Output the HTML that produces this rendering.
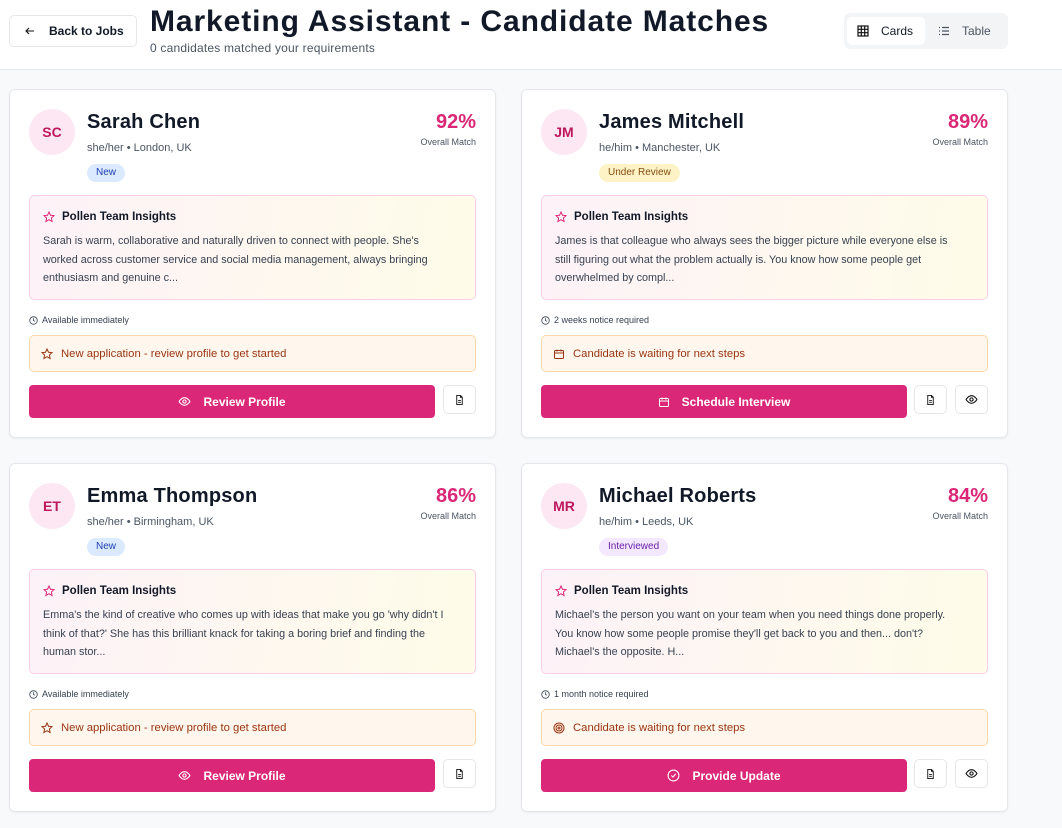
<!DOCTYPE html>
<html><head><meta charset="utf-8"><style>
*{box-sizing:border-box;margin:0;padding:0}
body{width:1062px;height:828px;overflow:hidden;background:#f8f9fb;font-family:"Liberation Sans",sans-serif;color:#111827;position:relative}
.hdr{position:absolute;left:0;top:0;width:1062px;height:70px;background:#fff;border-bottom:1px solid #e5e7eb}
.back{position:absolute;left:9px;top:15px;width:128px;height:32px;border:1px solid #e5e7eb;border-radius:5px;font-size:12px;font-weight:bold;display:flex;align-items:center;padding-left:14px;gap:13px}
h1{position:absolute;left:150px;top:5px;font-size:30px;font-weight:bold;letter-spacing:0.9px;color:#111827}
.subt{position:absolute;left:150px;top:41px;font-size:12px;color:#4b5563;letter-spacing:0.2px}
.tog{position:absolute;left:844px;top:13px;width:164px;height:36px;background:#f3f4f6;border-radius:6px}
.tog .c{position:absolute;left:3px;top:4px;width:78px;height:28px;background:#fff;border-radius:5px;font-size:12px;display:flex;align-items:center;padding-left:10px;gap:12px}
.tog .t{position:absolute;left:94px;top:4px;height:28px;font-size:12px;color:#4b5563;display:flex;align-items:center;gap:12px}
.card{position:absolute;width:487px;height:349px;background:#fff;border:1px solid #e5e7eb;border-radius:6px;box-shadow:0 1px 2px rgba(0,0,0,.05)}
.av{position:absolute;left:19px;top:19px;width:46px;height:46px;border-radius:50%;background:#fce7f3;color:#be185d;font-weight:bold;font-size:14px;display:flex;align-items:center;justify-content:center}
.nm{position:absolute;left:77px;top:21px;font-size:20px;font-weight:bold;letter-spacing:0.2px}
.loc{position:absolute;left:77px;top:52px;font-size:11px;color:#4b5563}
.bd{position:absolute;left:77px;top:74px;height:18px;border-radius:9px;font-size:10px;padding:0 9px;line-height:18px}
.pct{position:absolute;right:19px;top:21px;font-size:20px;font-weight:bold;color:#db2777}
.om{position:absolute;right:19px;top:47px;font-size:9px;color:#4b5563}
.ins{position:absolute;left:19px;top:105px;width:447px;height:105px;border:1px solid #fbcfe8;border-radius:5px;background:linear-gradient(100deg,#fdf2f8,#fefce8)}
.ins .tt{position:absolute;left:13px;top:15px;font-size:11.5px;font-weight:bold;display:flex;align-items:center;gap:7px}
.ins .tx{position:absolute;left:13px;top:36px;width:405px;font-size:10.8px;line-height:18.5px;color:#374151}
.av2{position:absolute;left:19px;top:225px;font-size:9px;color:#374151;display:flex;align-items:center;gap:4px}
.st{position:absolute;left:19px;top:245px;width:447px;height:37px;border:1px solid #fed7aa;border-radius:5px;background:#fff7ed;color:#9a3412;font-size:11.3px;display:flex;align-items:center;padding-left:11px;gap:8px}
.pb{position:absolute;left:19px;top:295px;width:406px;height:33px;background:#db2777;border-radius:4px;color:#fff;font-weight:bold;font-size:12px;display:flex;align-items:center;justify-content:center;gap:12px}
.pb.s{width:366px}
.ib{position:absolute;top:295px;width:33px;height:29px;border:1px solid #e5e7eb;border-radius:5px;background:#fff;display:flex;align-items:center;justify-content:center}
</style></head><body>
<div class="hdr">
<div class="back"><svg width="12" height="12" viewBox="0 0 24 24" fill="none" stroke="#111" stroke-width="2.2"><path d="M20 12H4M10 6l-6 6 6 6"/></svg>Back to Jobs</div>
<h1>Marketing Assistant - Candidate Matches</h1>
<div class="subt">0 candidates matched your requirements</div>
<div class="tog"><div class="c"><svg width="12" height="12" viewBox="0 0 12 12" fill="none" stroke="#111" stroke-width="1.2"><rect x="1" y="1" width="10" height="10"/><path d="M4.3 1v10M7.7 1v10M1 4.3h10M1 7.7h10"/></svg>Cards</div><div class="t"><svg width="12" height="12" viewBox="0 0 12 12" fill="none" stroke="#4b5563" stroke-width="1.2"><path d="M1 2.5h1M1 6h1M1 9.5h1M4 2.5h7M4 6h7M4 9.5h7"/></svg>Table</div></div>
</div>

<div class="card" style="left:9px;top:89px">
<div class="av">SC</div><div class="nm">Sarah Chen</div><div class="loc">she/her • London, UK</div>
<div class="bd" style="background:#dbeafe;color:#1e40af">New</div>
<div class="pct">92%</div><div class="om">Overall Match</div>
<div class="ins"><div class="tt"><svg width="12" height="12" viewBox="0 0 24 24" fill="none" stroke="#db2777" stroke-width="2"><path d="M12 2l3 6.5 7 .8-5.2 4.8 1.4 7L12 17.5 5.8 21l1.4-7L2 9.3l7-.8z"/></svg>Pollen Team Insights</div>
<div class="tx">Sarah is warm, collaborative and naturally driven to connect with people. She's worked across customer service and social media management, always bringing enthusiasm and genuine c...</div></div>
<div class="av2"><svg width="9" height="9" viewBox="0 0 24 24" fill="none" stroke="#4b5563" stroke-width="2.4"><circle cx="12" cy="12" r="10"/><path d="M12 6v6l4 2"/></svg>Available immediately</div>
<div class="st"><svg width="12" height="12" viewBox="0 0 24 24" fill="none" stroke="#9a3412" stroke-width="2"><path d="M12 2l3 6.5 7 .8-5.2 4.8 1.4 7L12 17.5 5.8 21l1.4-7L2 9.3l7-.8z"/></svg>New application - review profile to get started</div>
<div class="pb"><svg width="13" height="13" viewBox="0 0 24 24" fill="none" stroke="#fff" stroke-width="2"><path d="M2 12s4-7 10-7 10 7 10 7-4 7-10 7S2 12 2 12z"/><circle cx="12" cy="12" r="3"/></svg>Review Profile</div>
<div class="ib" style="left:433px"><svg width="11" height="12" viewBox="0 0 24 24" fill="none" stroke="#111" stroke-width="2"><path d="M14 2H6v20h12V6z"/><path d="M14 2v4h4M9 13h6M9 17h6"/></svg></div>
</div>

<div class="card" style="left:521px;top:89px">
<div class="av">JM</div><div class="nm">James Mitchell</div><div class="loc">he/him • Manchester, UK</div>
<div class="bd" style="background:#fef3c7;color:#854d0e">Under Review</div>
<div class="pct">89%</div><div class="om">Overall Match</div>
<div class="ins"><div class="tt"><svg width="12" height="12" viewBox="0 0 24 24" fill="none" stroke="#db2777" stroke-width="2"><path d="M12 2l3 6.5 7 .8-5.2 4.8 1.4 7L12 17.5 5.8 21l1.4-7L2 9.3l7-.8z"/></svg>Pollen Team Insights</div>
<div class="tx">James is that colleague who always sees the bigger picture while everyone else is still figuring out what the problem actually is. You know how some people get overwhelmed by compl...</div></div>
<div class="av2"><svg width="9" height="9" viewBox="0 0 24 24" fill="none" stroke="#4b5563" stroke-width="2.4"><circle cx="12" cy="12" r="10"/><path d="M12 6v6l4 2"/></svg>2 weeks notice required</div>
<div class="st"><svg width="12" height="12" viewBox="0 0 24 24" fill="none" stroke="#9a3412" stroke-width="2"><rect x="3" y="5" width="18" height="16" rx="2"/><path d="M3 10h18M8 3v4M16 3v4"/></svg>Candidate is waiting for next steps</div>
<div class="pb s"><svg width="12" height="12" viewBox="0 0 24 24" fill="none" stroke="#fff" stroke-width="2"><rect x="3" y="5" width="18" height="16" rx="2"/><path d="M3 10h18M8 3v4M16 3v4"/></svg>Schedule Interview</div>
<div class="ib" style="left:392px"><svg width="11" height="12" viewBox="0 0 24 24" fill="none" stroke="#111" stroke-width="2"><path d="M14 2H6v20h12V6z"/><path d="M14 2v4h4M9 13h6M9 17h6"/></svg></div>
<div class="ib" style="left:433px"><svg width="13" height="13" viewBox="0 0 24 24" fill="none" stroke="#111" stroke-width="2"><path d="M2 12s4-7 10-7 10 7 10 7-4 7-10 7S2 12 2 12z"/><circle cx="12" cy="12" r="3"/></svg></div>
</div>

<div class="card" style="left:9px;top:463px">
<div class="av">ET</div><div class="nm">Emma Thompson</div><div class="loc">she/her • Birmingham, UK</div>
<div class="bd" style="background:#dbeafe;color:#1e40af">New</div>
<div class="pct">86%</div><div class="om">Overall Match</div>
<div class="ins"><div class="tt"><svg width="12" height="12" viewBox="0 0 24 24" fill="none" stroke="#db2777" stroke-width="2"><path d="M12 2l3 6.5 7 .8-5.2 4.8 1.4 7L12 17.5 5.8 21l1.4-7L2 9.3l7-.8z"/></svg>Pollen Team Insights</div>
<div class="tx">Emma's the kind of creative who comes up with ideas that make you go 'why didn't I think of that?' She has this brilliant knack for taking a boring brief and finding the human stor...</div></div>
<div class="av2"><svg width="9" height="9" viewBox="0 0 24 24" fill="none" stroke="#4b5563" stroke-width="2.4"><circle cx="12" cy="12" r="10"/><path d="M12 6v6l4 2"/></svg>Available immediately</div>
<div class="st"><svg width="12" height="12" viewBox="0 0 24 24" fill="none" stroke="#9a3412" stroke-width="2"><path d="M12 2l3 6.5 7 .8-5.2 4.8 1.4 7L12 17.5 5.8 21l1.4-7L2 9.3l7-.8z"/></svg>New application - review profile to get started</div>
<div class="pb"><svg width="13" height="13" viewBox="0 0 24 24" fill="none" stroke="#fff" stroke-width="2"><path d="M2 12s4-7 10-7 10 7 10 7-4 7-10 7S2 12 2 12z"/><circle cx="12" cy="12" r="3"/></svg>Review Profile</div>
<div class="ib" style="left:433px"><svg width="11" height="12" viewBox="0 0 24 24" fill="none" stroke="#111" stroke-width="2"><path d="M14 2H6v20h12V6z"/><path d="M14 2v4h4M9 13h6M9 17h6"/></svg></div>
</div>

<div class="card" style="left:521px;top:463px">
<div class="av">MR</div><div class="nm">Michael Roberts</div><div class="loc">he/him • Leeds, UK</div>
<div class="bd" style="background:#f3e8ff;color:#6b21a8">Interviewed</div>
<div class="pct">84%</div><div class="om">Overall Match</div>
<div class="ins"><div class="tt"><svg width="12" height="12" viewBox="0 0 24 24" fill="none" stroke="#db2777" stroke-width="2"><path d="M12 2l3 6.5 7 .8-5.2 4.8 1.4 7L12 17.5 5.8 21l1.4-7L2 9.3l7-.8z"/></svg>Pollen Team Insights</div>
<div class="tx">Michael's the person you want on your team when you need things done properly. You know how some people promise they'll get back to you and then... don't? Michael's the opposite. H...</div></div>
<div class="av2"><svg width="9" height="9" viewBox="0 0 24 24" fill="none" stroke="#4b5563" stroke-width="2.4"><circle cx="12" cy="12" r="10"/><path d="M12 6v6l4 2"/></svg>1 month notice required</div>
<div class="st"><svg width="12" height="12" viewBox="0 0 24 24" fill="none" stroke="#9a3412" stroke-width="2"><circle cx="12" cy="12" r="10"/><circle cx="12" cy="12" r="6"/><circle cx="12" cy="12" r="2"/></svg>Candidate is waiting for next steps</div>
<div class="pb s"><svg width="13" height="13" viewBox="0 0 24 24" fill="none" stroke="#fff" stroke-width="2"><circle cx="12" cy="12" r="10"/><path d="M8 12l3 3 5-6"/></svg>Provide Update</div>
<div class="ib" style="left:392px"><svg width="11" height="12" viewBox="0 0 24 24" fill="none" stroke="#111" stroke-width="2"><path d="M14 2H6v20h12V6z"/><path d="M14 2v4h4M9 13h6M9 17h6"/></svg></div>
<div class="ib" style="left:433px"><svg width="13" height="13" viewBox="0 0 24 24" fill="none" stroke="#111" stroke-width="2"><path d="M2 12s4-7 10-7 10 7 10 7-4 7-10 7S2 12 2 12z"/><circle cx="12" cy="12" r="3"/></svg></div>
</div>
</body></html>
